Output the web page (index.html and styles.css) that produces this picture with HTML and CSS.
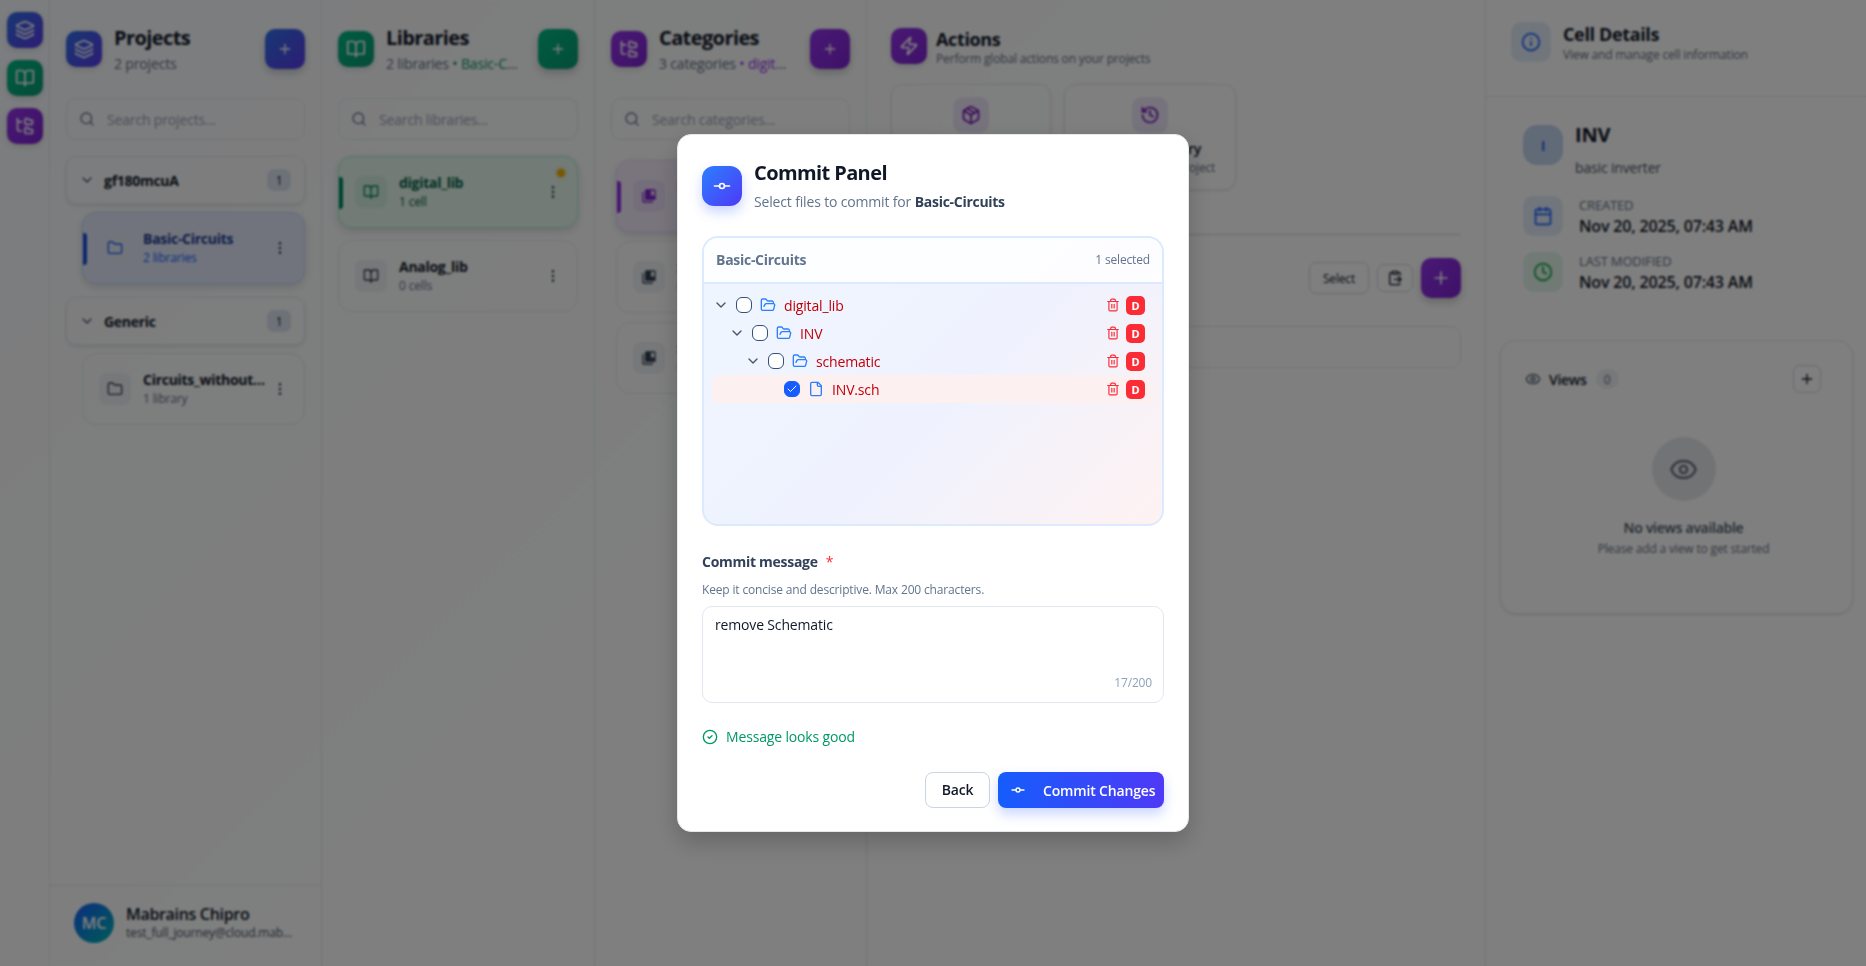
FILE: index.html
```html
<!DOCTYPE html>
<html lang="en">
<head>
    <meta charset="UTF-8">
    <meta name="viewport" content="width=device-width, initial-scale=1.0">
    <title>Commit Panel</title>
    <link rel="stylesheet" href="styles.css">
</head>
<body>
    <svg class="sprite" xmlns="http://www.w3.org/2000/svg">
        <symbol id="i-layers" viewBox="0 0 24 24"><path d="M12.83 2.18a2 2 0 0 0-1.66 0L2.6 6.08a1 1 0 0 0 0 1.83l8.58 3.91a2 2 0 0 0 1.66 0l8.58-3.9a1 1 0 0 0 0-1.83z"/><path d="M2 12a1 1 0 0 0 .58.91l8.6 3.91a2 2 0 0 0 1.65 0l8.58-3.9A1 1 0 0 0 22 12"/><path d="M2 17a1 1 0 0 0 .58.91l8.6 3.91a2 2 0 0 0 1.65 0l8.58-3.9A1 1 0 0 0 22 17"/></symbol>
        <symbol id="i-book" viewBox="0 0 24 24"><path d="M12 7v14"/><path d="M3 18a1 1 0 0 1-1-1V4a1 1 0 0 1 1-1h5a4 4 0 0 1 4 4 4 4 0 0 1 4-4h5a1 1 0 0 1 1 1v13a1 1 0 0 1-1 1h-6a3 3 0 0 0-3 3 3 3 0 0 0-3-3z"/></symbol>
        <symbol id="i-tree" viewBox="0 0 24 24"><path d="M20 10a1 1 0 0 0 1-1V6a1 1 0 0 0-1-1h-2.5a1 1 0 0 1-.8-.4l-.9-1.2A1 1 0 0 0 15 3h-2a1 1 0 0 0-1 1v5a1 1 0 0 0 1 1Z"/><path d="M20 21a1 1 0 0 0 1-1v-3a1 1 0 0 0-1-1h-2.9a1 1 0 0 1-.88-.55l-.42-.85a1 1 0 0 0-.92-.6H13a1 1 0 0 0-1 1v5a1 1 0 0 0 1 1Z"/><path d="M3 5a2 2 0 0 0 2 2h3"/><path d="M3 3v13a2 2 0 0 0 2 2h3"/></symbol>
        <symbol id="i-folder" viewBox="0 0 24 24"><path d="M20 20a2 2 0 0 0 2-2V8a2 2 0 0 0-2-2h-7.9a2 2 0 0 1-1.69-.9L9.6 3.9A2 2 0 0 0 7.93 3H4a2 2 0 0 0-2 2v13a2 2 0 0 0 2 2Z"/></symbol>
        <symbol id="i-folder-open" viewBox="0 0 24 24"><path d="m6 14 1.5-2.9A2 2 0 0 1 9.24 10H20a2 2 0 0 1 1.94 2.5l-1.54 6a2 2 0 0 1-1.95 1.5H4a2 2 0 0 1-2-2V5a2 2 0 0 1 2-2h3.9a2 2 0 0 1 1.69.9l.81 1.2a2 2 0 0 0 1.67.9H18a2 2 0 0 1 2 2v2"/></symbol>
        <symbol id="i-file" viewBox="0 0 24 24"><path d="M15 2H6a2 2 0 0 0-2 2v16a2 2 0 0 0 2 2h12a2 2 0 0 0 2-2V7Z"/><path d="M14 2v4a2 2 0 0 0 2 2h4"/></symbol>
        <symbol id="i-search" viewBox="0 0 24 24"><circle cx="11" cy="11" r="8"/><path d="m21 21-4.3-4.3"/></symbol>
        <symbol id="i-chevron" viewBox="0 0 24 24"><path d="m6 9 6 6 6-6"/></symbol>
        <symbol id="i-dots" viewBox="0 0 24 24"><circle cx="12" cy="5" r="1"/><circle cx="12" cy="12" r="1"/><circle cx="12" cy="19" r="1"/></symbol>
        <symbol id="i-plus" viewBox="0 0 24 24"><path d="M5 12h14"/><path d="M12 5v14"/></symbol>
        <symbol id="i-commit" viewBox="0 0 24 24"><circle cx="12" cy="12" r="3"/><path d="M3 12h6"/><path d="M15 12h6"/></symbol>
        <symbol id="i-trash" viewBox="0 0 24 24"><path d="M3 6h18"/><path d="M19 6v14c0 1-1 2-2 2H7c-1 0-2-1-2-2V6"/><path d="M8 6V4c0-1 1-2 2-2h4c1 0 2 1 2 2v2"/><path d="M10 11v6"/><path d="M14 11v6"/></symbol>
        <symbol id="i-zap" viewBox="0 0 24 24"><path d="M4 14a1 1 0 0 1-.78-1.63l9.9-10.2a.5.5 0 0 1 .86.46l-1.92 6.02A1 1 0 0 0 13 10h7a1 1 0 0 1 .78 1.63l-9.9 10.2a.5.5 0 0 1-.86-.46l1.92-6.02A1 1 0 0 0 11 14z"/></symbol>
        <symbol id="i-package" viewBox="0 0 24 24"><path d="M11 21.73a2 2 0 0 0 2 0l7-4A2 2 0 0 0 21 16V8a2 2 0 0 0-1-1.73l-7-4a2 2 0 0 0-2 0l-7 4A2 2 0 0 0 3 8v8a2 2 0 0 0 1 1.73z"/><path d="M12 22V12"/><path d="m3.3 7 8.7 5 8.7-5"/><path d="m7.5 4.27 9 5.15"/></symbol>
        <symbol id="i-history" viewBox="0 0 24 24"><path d="M3 12a9 9 0 1 0 9-9 9.75 9.75 0 0 0-6.74 2.74L3 8"/><path d="M3 3v5h5"/><path d="M12 7v5l4 2"/></symbol>
        <symbol id="i-info" viewBox="0 0 24 24"><circle cx="12" cy="12" r="10"/><path d="M12 16v-4"/><path d="M12 8h.01"/></symbol>
        <symbol id="i-calendar" viewBox="0 0 24 24"><path d="M8 2v4"/><path d="M16 2v4"/><rect x="3" y="4" width="18" height="18" rx="2"/><path d="M3 10h18"/></symbol>
        <symbol id="i-clock" viewBox="0 0 24 24"><circle cx="12" cy="12" r="10"/><path d="M12 6v6l4 2"/></symbol>
        <symbol id="i-eye" viewBox="0 0 24 24"><path d="M2.062 12.348a1 1 0 0 1 0-.696 10.75 10.75 0 0 1 19.876 0 1 1 0 0 1 0 .696 10.75 10.75 0 0 1-19.876 0"/><circle cx="12" cy="12" r="3"/></symbol>
        <symbol id="i-check-circle" viewBox="0 0 24 24"><circle cx="12" cy="12" r="10"/><path d="m9 12 2 2 4-4"/></symbol>
        <symbol id="i-check" viewBox="0 0 24 24"><path d="M20 6 9 17l-5-5"/></symbol>
        <symbol id="i-paste" viewBox="0 0 24 24"><path d="M11 14h10"/><path d="M16 4h2a2 2 0 0 1 2 2v1.344"/><path d="m17 18 4-4-4-4"/><path d="M8 4H6a2 2 0 0 0-2 2v14a2 2 0 0 0 2 2h12a2 2 0 0 0 1.793-1.113"/><rect x="8" y="2" width="8" height="4" rx="1"/></symbol>
        <symbol id="i-collection" viewBox="0 0 24 24"><path class="solid" d="M4 6H2v14c0 1.1.9 2 2 2h14v-2H4V6zm16-4H8c-1.1 0-2 .9-2 2v12c0 1.1.9 2 2 2h12c1.1 0 2-.9 2-2V4c0-1.1-.9-2-2-2zm0 10l-2.5-1.5L15 12V4h5v8z"/></symbol>
    </svg>

    <div class="app">
        <nav class="rail">
            <div class="tile tile-blue"><svg class="icon i20"><use href="#i-layers"/></svg></div>
            <div class="tile tile-green"><svg class="icon i20"><use href="#i-book"/></svg></div>
            <div class="tile tile-purple"><svg class="icon i20"><use href="#i-tree"/></svg></div>
        </nav>

        <section class="col col-projects">
            <div class="col-head">
                <div class="tile tile-blue"><svg class="icon i20"><use href="#i-layers"/></svg></div>
                <div class="col-title">
                    <h2>Projects</h2>
                    <p>2 projects</p>
                </div>
                <button class="add tile-blue"><svg class="icon i16"><use href="#i-plus"/></svg></button>
            </div>
            <div class="search"><svg class="icon i16"><use href="#i-search"/></svg><span>Search projects...</span></div>
            <div class="list">
                <div class="group">
                    <svg class="icon i16 muted"><use href="#i-chevron"/></svg>
                    <span class="group-name">gf180mcuA</span>
                    <span class="count">1</span>
                </div>
                <div class="item item-sub active-blue">
                    <span class="marker"></span>
                    <div class="item-icon"><svg class="icon i16"><use href="#i-folder"/></svg></div>
                    <div class="item-text"><b>Basic-Circuits</b><small>2 libraries</small></div>
                    <svg class="icon i16 dots"><use href="#i-dots"/></svg>
                </div>
                <div class="group group-next">
                    <svg class="icon i16 muted"><use href="#i-chevron"/></svg>
                    <span class="group-name">Generic</span>
                    <span class="count">1</span>
                </div>
                <div class="item item-sub">
                    <div class="item-icon"><svg class="icon i16"><use href="#i-folder"/></svg></div>
                    <div class="item-text"><b>Circuits_without_views</b><small>1 library</small></div>
                    <svg class="icon i16 dots"><use href="#i-dots"/></svg>
                </div>
            </div>
            <div class="user">
                <div class="avatar">MC</div>
                <div class="user-text"><b>Mabrains Chipro</b><small>test_full_journey@cloud.mabrains.com</small></div>
            </div>
        </section>

        <section class="col col-libs">
            <div class="col-head">
                <div class="tile tile-green"><svg class="icon i20"><use href="#i-book"/></svg></div>
                <div class="col-title">
                    <h2>Libraries</h2>
                    <p>2 libraries <span class="crumb-green">• Basic-Circuits</span></p>
                </div>
                <button class="add tile-green"><svg class="icon i16"><use href="#i-plus"/></svg></button>
            </div>
            <div class="search"><svg class="icon i16"><use href="#i-search"/></svg><span>Search libraries...</span></div>
            <div class="list">
                <div class="item active-green">
                    <span class="marker"></span>
                    <span class="dot"></span>
                    <div class="item-icon"><svg class="icon i16"><use href="#i-book"/></svg></div>
                    <div class="item-text"><b>digital_lib</b><small>1 cell</small></div>
                    <svg class="icon i16 dots"><use href="#i-dots"/></svg>
                </div>
                <div class="item">
                    <div class="item-icon"><svg class="icon i16"><use href="#i-book"/></svg></div>
                    <div class="item-text"><b>Analog_lib</b><small>0 cells</small></div>
                    <svg class="icon i16 dots"><use href="#i-dots"/></svg>
                </div>
            </div>
        </section>

        <section class="col">
            <div class="col-head">
                <div class="tile tile-purple"><svg class="icon i20"><use href="#i-tree"/></svg></div>
                <div class="col-title">
                    <h2>Categories</h2>
                    <p>3 categories <span class="crumb-purple">• digital_lib</span></p>
                </div>
                <button class="add tile-purple"><svg class="icon i16"><use href="#i-plus"/></svg></button>
            </div>
            <div class="search"><svg class="icon i16"><use href="#i-search"/></svg><span>Search categories...</span></div>
            <div class="list list-cats">
                <div class="item active-purple">
                    <span class="marker"></span>
                    <div class="item-icon"><svg class="icon i16"><use href="#i-collection"/></svg></div>
                    <div class="item-text"><b>Layout</b><small>1 cell</small></div>
                </div>
                <div class="item">
                    <div class="item-icon"><svg class="icon i16"><use href="#i-collection"/></svg></div>
                    <div class="item-text"><b>Schematic</b><small>0 cells</small></div>
                </div>
                <div class="item">
                    <div class="item-icon"><svg class="icon i16"><use href="#i-collection"/></svg></div>
                    <div class="item-text"><b>Symbol</b><small>0 cells</small></div>
                </div>
            </div>
        </section>

        <main class="actions">
            <div class="actions-head">
                <div class="tile tile-purple"><svg class="icon i20"><use href="#i-zap"/></svg></div>
                <div class="head-text">
                    <h3>Actions</h3>
                    <p>Perform global actions on your projects</p>
                </div>
            </div>
            <div class="action-cards">
                <div class="action-card card-a">
                    <div class="action-icon"><svg class="icon i20"><use href="#i-package"/></svg></div>
                    <b>Commit Panel</b>
                    <small>Commit your changes</small>
                </div>
                <div class="action-card card-b">
                    <div class="action-icon"><svg class="icon i20"><use href="#i-history"/></svg></div>
                    <b>Commit History</b>
                    <small>View history of a project</small>
                </div>
            </div>
            <div class="tabs"></div>
            <div class="toolbar">
                <button class="btn-select">Select</button>
                <button class="btn-paste"><svg class="icon i16"><use href="#i-paste"/></svg></button>
                <button class="add tile-purple"><svg class="icon i20"><use href="#i-plus"/></svg></button>
            </div>
            <div class="cell-search"></div>
        </main>

        <aside class="details">
            <div class="details-head">
                <div class="soft-tile soft-blue"><svg class="icon i20"><use href="#i-info"/></svg></div>
                <div class="head-text">
                    <h3>Cell Details</h3>
                    <p>View and manage cell information</p>
                </div>
            </div>
            <div class="details-body">
                <div class="cell-row">
                    <div class="soft-tile cell-letter">I</div>
                    <div>
                        <h2>INV</h2>
                        <p class="cell-desc">basic inverter</p>
                    </div>
                </div>
                <div class="meta">
                    <div class="soft-tile soft-blue"><svg class="icon i20"><use href="#i-calendar"/></svg></div>
                    <div class="meta-text"><span>CREATED</span><b>Nov 20, 2025, 07:43 AM</b></div>
                </div>
                <div class="meta">
                    <div class="soft-tile soft-green"><svg class="icon i20"><use href="#i-clock"/></svg></div>
                    <div class="meta-text"><span>LAST MODIFIED</span><b>Nov 20, 2025, 07:43 AM</b></div>
                </div>
            </div>
            <div class="views">
                <div class="views-head">
                    <svg class="icon i16 muted"><use href="#i-eye"/></svg>
                    <b>Views</b>
                    <span class="views-count">0</span>
                    <button class="views-add"><svg class="icon i16"><use href="#i-plus"/></svg></button>
                </div>
                <div class="views-empty">
                    <div class="empty-circle"><svg class="icon i28"><use href="#i-eye"/></svg></div>
                    <b>No views available</b>
                    <small>Please add a view to get started</small>
                </div>
            </div>
        </aside>
    </div>

    <div class="overlay">
        <div class="modal">
            <div class="modal-head">
                <div class="modal-icon"><svg class="icon i20"><use href="#i-commit"/></svg></div>
                <div class="modal-title">
                    <h1>Commit Panel</h1>
                    <p>Select files to commit for <b>Basic-Circuits</b></p>
                </div>
            </div>

            <div class="files">
                <div class="files-head">
                    <b>Basic-Circuits</b>
                    <span>1 selected</span>
                </div>
                <div class="files-tree">
                    <div class="row">
                        <svg class="icon i16 chev"><use href="#i-chevron"/></svg>
                        <span class="check"></span>
                        <svg class="icon i16 ficon"><use href="#i-folder-open"/></svg>
                        <span class="fname">digital_lib</span>
                        <svg class="icon i14 trash"><use href="#i-trash"/></svg>
                        <span class="tag">D</span>
                    </div>
                    <div class="row lvl1">
                        <svg class="icon i16 chev"><use href="#i-chevron"/></svg>
                        <span class="check"></span>
                        <svg class="icon i16 ficon"><use href="#i-folder-open"/></svg>
                        <span class="fname">INV</span>
                        <svg class="icon i14 trash"><use href="#i-trash"/></svg>
                        <span class="tag">D</span>
                    </div>
                    <div class="row lvl2">
                        <svg class="icon i16 chev"><use href="#i-chevron"/></svg>
                        <span class="check"></span>
                        <svg class="icon i16 ficon"><use href="#i-folder-open"/></svg>
                        <span class="fname">schematic</span>
                        <svg class="icon i14 trash"><use href="#i-trash"/></svg>
                        <span class="tag">D</span>
                    </div>
                    <div class="row lvl3 selected">
                        <span class="chev-space"></span>
                        <span class="check checked"><svg class="icon i12"><use href="#i-check"/></svg></span>
                        <svg class="icon i16 ficon"><use href="#i-file"/></svg>
                        <span class="fname">INV.sch</span>
                        <svg class="icon i14 trash"><use href="#i-trash"/></svg>
                        <span class="tag">D</span>
                    </div>
                </div>
            </div>

            <div class="msg-label"><b>Commit message</b><span class="req">*</span></div>
            <p class="msg-hint">Keep it concise and descriptive. Max 200 characters.</p>
            <div class="msg-box">
                <p>remove Schematic</p>
                <span class="msg-count">17/200</span>
            </div>
            <div class="msg-ok"><svg class="icon i16"><use href="#i-check-circle"/></svg><span>Message looks good</span></div>

            <div class="modal-foot">
                <button class="btn-back">Back</button>
                <button class="btn-commit"><svg class="icon i16"><use href="#i-commit"/></svg><span>Commit Changes</span></button>
            </div>
        </div>
    </div>
</body>
</html>
```

FILE: styles.css
```css
* {
    box-sizing: border-box;
}
html, body {
    height: 100%;
}
body {
    margin: 0;
    font-family: "Open Sans", Arial, sans-serif;
    letter-spacing: -0.01em;
    color: #101828;
    background: linear-gradient(135deg, #f8fafc, #ffffff 50%);
    overflow: hidden;
}
h1, h2, h3, p {
    margin: 0;
}
b {
    letter-spacing: -0.02em;
}
button {
    font-family: inherit;
    letter-spacing: inherit;
    cursor: pointer;
}
small {
    display: block;
}
.sprite {
    display: none;
}
.icon {
    display: block;
    flex: none;
    fill: none;
    stroke: currentColor;
    stroke-width: 2;
    stroke-linecap: round;
    stroke-linejoin: round;
}
.solid {
    fill: currentColor;
    stroke: none;
}
.i12 { width: 12px; height: 12px; }
.i14 { width: 14px; height: 14px; }
.i16 { width: 16px; height: 16px; }
.i20 { width: 20px; height: 20px; }
.i28 { width: 29px; height: 29px; }
.muted { color: #475467; }

.app {
    display: flex;
    height: 966px;
}
.rail {
    width: 50px;
    flex: none;
    padding: 12px 7px;
    display: flex;
    flex-direction: column;
    gap: 12px;
    border-right: 1px solid #e5e7eb;
}
.tile {
    width: 36px;
    height: 36px;
    flex: none;
    border-radius: 10px;
    display: flex;
    align-items: center;
    justify-content: center;
    color: #fff;
    box-shadow: 0 2px 6px rgba(0, 0, 0, 0.15);
}
.tile-blue { background: linear-gradient(135deg, #2f6fe8, #5a3ae8); }
.tile-green { background: linear-gradient(135deg, #00b884, #0a9a70); }
.tile-purple { background: linear-gradient(135deg, #9333ea, #7c22ce); }

.col {
    width: 272px;
    flex: none;
    display: flex;
    flex-direction: column;
    padding: 0 16px;
    border-right: 1px solid #e5e7eb;
}
.col-projects { width: 272px; }
.col-libs { width: 273px; }
.col-head {
    height: 98px;
    padding-top: 29px;
    display: flex;
    align-items: flex-start;
}
.col-head .tile {
    margin-top: 2px;
}
.col-title {
    flex: 1;
    min-width: 0;
    margin-top: -1px;
    padding: 0 18px 0 12px;
}
.col-title h2 {
    font-size: 20px;
    line-height: 20px;
    font-weight: 700;
    letter-spacing: -0.03em;
}
.col-title p {
    margin-top: 6px;
    font-size: 14px;
    line-height: 20px;
    color: #667085;
    white-space: nowrap;
    overflow: hidden;
    text-overflow: ellipsis;
}
.crumb-green { color: #059669; }
.crumb-purple { color: #9333ea; }
.add {
    width: 40px;
    height: 40px;
    flex: none;
    border: 0;
    border-radius: 10px;
    display: flex;
    align-items: center;
    justify-content: center;
    color: #fff;
    box-shadow: 0 4px 8px rgba(0, 0, 0, 0.2);
}
.search {
    height: 42px;
    flex: none;
    display: flex;
    align-items: center;
    gap: 12px;
    padding: 0 12px;
    border: 1px solid #e5e7eb;
    border-radius: 10px;
    font-size: 14px;
    color: #98a2b3;
}
.search .icon {
    color: #667085;
}
.list {
    flex: 1;
    padding-top: 16px;
    display: flex;
    flex-direction: column;
    gap: 12px;
}
.list-cats {
    padding: 20px 0 0 5px;
    gap: 9px;
}
.group {
    height: 48px;
    flex: none;
    display: flex;
    align-items: center;
    gap: 9px;
    padding: 0 13px 0 12px;
    border: 1px solid #e5e7eb;
    border-radius: 10px;
    box-shadow: 0 2px 4px rgba(0, 0, 0, 0.1);
    margin-bottom: -4px;
}
.group-next {
    margin-top: 1px;
}
.group-name {
    flex: 1;
    font-size: 14px;
    font-weight: 700;
    letter-spacing: -0.02em;
}
.count {
    width: 24px;
    height: 22px;
    border-radius: 7px;
    background: #dbe4f0;
    font-size: 12px;
    font-weight: 500;
    display: flex;
    align-items: center;
    justify-content: center;
}
.item {
    position: relative;
    height: 72px;
    flex: none;
    display: flex;
    align-items: center;
    padding: 0 16px;
    border: 1px solid #e5e7eb;
    border-radius: 14px;
}
.item-sub {
    margin-left: 16px;
}
.item-icon {
    width: 32px;
    height: 32px;
    flex: none;
    border-radius: 8px;
    background: #eef0f3;
    color: #344054;
    display: flex;
    align-items: center;
    justify-content: center;
}
.item-text {
    flex: 1;
    min-width: 0;
    padding-left: 12px;
}
.item-text b {
    display: block;
    font-size: 14px;
    line-height: 20px;
    font-weight: 700;
    white-space: nowrap;
    overflow: hidden;
    text-overflow: ellipsis;
}
.item-text small {
    font-size: 12px;
    line-height: 18px;
    color: #667085;
}
.dots {
    color: #344054;
    margin-left: 4px;
}
.marker {
    position: absolute;
    left: 0;
    top: 20px;
    width: 4px;
    height: 32px;
    border-radius: 0 3px 3px 0;
}
.dot {
    position: absolute;
    top: 12px;
    right: 12px;
    width: 8px;
    height: 8px;
    border-radius: 50%;
    background: #f0b100;
    box-shadow: 0 0 0 2px rgba(240, 177, 0, 0.2);
}
.active-blue {
    background: #e2e9fa;
    border-color: #bedbff;
    box-shadow: 0 3px 8px rgba(0, 0, 0, 0.14);
}
.active-blue .marker { background: #1d4ed8; }
.active-blue b { color: #1c398e; }
.active-blue small, .active-blue .item-icon { color: #155dfc; }
.active-blue .item-icon { background: #e3e9f5; }
.active-green {
    background: #e4f6ec;
    border-color: #a4f4cf;
    box-shadow: 0 3px 8px rgba(0, 0, 0, 0.14);
}
.active-green .marker { background: #00875f; }
.active-green b, .active-green small { color: #006045; }
.active-green .item-icon { background: #d3eee0; color: #00875f; }
.active-purple {
    background: #f3ebfb;
    border-color: #e9d4ff;
    box-shadow: 0 3px 8px rgba(0, 0, 0, 0.14);
}
.active-purple .marker { background: #8e2de2; }
.active-purple .item-icon { background: #e9dcf6; color: #7e22ce; }
.user {
    height: 81px;
    margin: 0 -16px;
    padding: 0 24px 7px;
    flex: none;
    display: flex;
    align-items: center;
    gap: 12px;
    border-top: 1px solid #e5e7eb;
}
.avatar {
    width: 40px;
    height: 40px;
    flex: none;
    border-radius: 50%;
    background: linear-gradient(135deg, #155dfc, #00b8b0);
    color: #fff;
    font-size: 16px;
    font-weight: 600;
    display: flex;
    align-items: center;
    justify-content: center;
}
.user-text {
    min-width: 0;
    flex: 1;
}
.user-text b {
    display: block;
    font-size: 16px;
    line-height: 20px;
    font-weight: 600;
}
.user-text small {
    font-size: 12px;
    line-height: 18px;
    color: #4a5565;
    white-space: nowrap;
    overflow: hidden;
    text-overflow: ellipsis;
}

.actions {
    width: 619px;
    flex: none;
    padding: 28px 24px 0;
    border-right: 1px solid #e5e7eb;
}
.actions-head {
    display: flex;
    gap: 9px;
}
.head-text h3 {
    font-size: 18px;
    line-height: 22px;
    font-weight: 700;
    letter-spacing: -0.02em;
}
.head-text p {
    font-size: 12px;
    line-height: 18px;
    color: #667085;
}
.action-cards {
    margin-top: 16px;
    display: flex;
    gap: 13px;
}
.action-card {
    height: 106px;
    padding-top: 12px;
    border: 1px solid #e5e7eb;
    border-radius: 12px;
    box-shadow: 0 1px 3px rgba(0, 0, 0, 0.1);
    text-align: center;
    font-size: 14px;
    white-space: nowrap;
}
.card-a { width: 160px; }
.card-b { width: 172px; }
.action-card b {
    display: block;
    margin-top: 6px;
    font-weight: 600;
    line-height: 20px;
}
.action-card small {
    font-size: 12px;
    line-height: 18px;
    color: #667085;
}
.action-icon {
    width: 36px;
    height: 36px;
    margin: 0 auto;
    border-radius: 10px;
    background: #eee6f8;
    color: #6e11b0;
    display: flex;
    align-items: center;
    justify-content: center;
}
.tabs {
    height: 1px;
    margin-top: 44px;
    background: #cbd5e1;
}
.toolbar {
    margin-top: 23px;
    height: 40px;
    display: flex;
    align-items: center;
    justify-content: flex-end;
    gap: 8px;
}
.btn-select {
    width: 60px;
    height: 32px;
    padding: 0;
    background: none;
    border: 1px solid #d0d5dd;
    border-radius: 7px;
    font-size: 12px;
    font-weight: 500;
    color: #101828;
}
.btn-paste {
    width: 36px;
    height: 28px;
    padding: 0;
    background: none;
    border: 1px solid #d0d5dd;
    border-radius: 7px;
    color: #101828;
    display: flex;
    align-items: center;
    justify-content: center;
}
.cell-search {
    margin-top: 28px;
    height: 42px;
    border: 1px solid #e2e8f0;
    border-radius: 10px;
}

.details {
    flex: 1;
    min-width: 0;
}
.details-head {
    height: 97px;
    padding: 22px 25px 0;
    display: flex;
    gap: 12px;
    border-bottom: 1px solid #e5e7eb;
}
.details-head .head-text {
    margin-top: 1px;
}
.details-head .head-text p {
    margin-top: 1px;
}
.soft-tile {
    width: 40px;
    height: 40px;
    flex: none;
    border-radius: 10px;
    display: flex;
    align-items: center;
    justify-content: center;
}
.soft-blue { background: #e3ecfa; color: #155dfc; }
.soft-green { background: #e4f5ea; color: #00a63e; }
.details-body {
    padding: 28px 37px 0;
}
.cell-row {
    display: flex;
    gap: 12px;
    height: 71px;
}
.cell-row h2 {
    font-size: 20px;
    line-height: 20px;
    font-weight: 700;
}
.cell-letter {
    background: #c3d4ee;
    color: #1447e6;
    font-size: 14px;
    font-weight: 600;
    border-radius: 14px;
}
.cell-desc {
    margin-top: 13px;
    font-size: 14px;
    line-height: 20px;
    color: #4a5565;
}
.meta {
    display: flex;
    gap: 16px;
    height: 56px;
}
.meta-text span {
    display: block;
    font-size: 13px;
    line-height: 18px;
    font-weight: 500;
    color: #667085;
}
.meta-text b {
    display: block;
    margin-top: 1px;
    font-size: 16px;
    line-height: 22px;
    font-weight: 600;
    letter-spacing: -0.01em;
}
.views {
    margin: 32px 13px 0 14px;
    height: 274px;
    border: 1px solid #e5e7eb;
    border-radius: 16px;
    padding: 24px 31px 0 24px;
    box-shadow: 0 1px 3px rgba(0, 0, 0, 0.12);
}
.views-head {
    display: flex;
    align-items: center;
    gap: 8px;
    height: 28px;
    font-size: 14px;
}
.views-head b {
    font-weight: 600;
}
.views-count {
    margin-left: 1px;
    width: 23px;
    height: 20px;
    border-radius: 10px;
    background: #eef0f3;
    color: #667085;
    font-size: 12px;
    display: flex;
    align-items: center;
    justify-content: center;
}
.views-add {
    margin-left: auto;
    width: 28px;
    height: 28px;
    padding: 0;
    background: none;
    border: 1px solid #d0d5dd;
    border-radius: 7px;
    color: #101828;
    display: flex;
    align-items: center;
    justify-content: center;
}
.views-empty {
    margin-top: 44px;
    margin-right: -21px;
    display: flex;
    flex-direction: column;
    align-items: center;
}
.empty-circle {
    width: 64px;
    height: 64px;
    border-radius: 50%;
    background: #e5e7eb;
    color: #6a7282;
    display: flex;
    align-items: center;
    justify-content: center;
}
.views-empty b {
    margin-top: 17px;
    font-size: 14px;
    line-height: 20px;
    font-weight: 600;
    color: #4a5565;
}
.views-empty small {
    margin-top: 2px;
    font-size: 12px;
    line-height: 18px;
    color: #6a7282;
}

.overlay {
    position: fixed;
    inset: 0;
    background: rgba(0, 0, 0, 0.5);
    backdrop-filter: blur(1px);
    display: flex;
    align-items: center;
    justify-content: center;
}
.modal {
    width: 512px;
    height: 698px;
    padding: 31px 24px 0;
    background: #fff;
    border: 1px solid #e5e7eb;
    border-radius: 14px;
    box-shadow: 0 10px 25px rgba(0, 0, 0, 0.2);
}
.modal-head {
    display: flex;
    gap: 12px;
    height: 70px;
}
.modal-icon {
    width: 40px;
    height: 40px;
    flex: none;
    border-radius: 12px;
    background: linear-gradient(135deg, #2b7fff, #4f39f6);
    color: #fff;
    display: flex;
    align-items: center;
    justify-content: center;
    box-shadow: 0 6px 12px rgba(43, 90, 255, 0.25);
}
.modal-title h1 {
    margin-top: -5px;
    font-size: 20px;
    line-height: 24px;
    font-weight: 700;
    letter-spacing: -0.03em;
}
.modal-title p {
    margin-top: 7px;
    font-size: 14px;
    line-height: 20px;
    color: #62748e;
}
.modal-title b {
    font-weight: 700;
    color: #314158;
}
.files {
    height: 290px;
    border: 2px solid #dbeafe;
    border-radius: 16px;
    overflow: hidden;
    background: linear-gradient(135deg, #eff6ff, #eff2fe 55%, #fef2f2);
}
.files-head {
    height: 46px;
    padding: 0 12px 2px;
    display: flex;
    align-items: center;
    justify-content: space-between;
    background: rgba(255, 255, 255, 0.85);
    border-bottom: 2px solid #dbeafe;
}
.files-head b {
    font-size: 14px;
    font-weight: 700;
    color: #62748e;
}
.files-head span {
    font-size: 12px;
    color: #62748e;
}
.files-tree {
    padding: 7px 8px;
}
.row {
    height: 28px;
    display: flex;
    align-items: center;
    padding: 0 9px 0 1px;
    border-radius: 8px;
    color: #c10007;
    font-size: 14px;
}
.lvl1 { padding-left: 17px; }
.lvl2 { padding-left: 33px; }
.lvl3 { padding-left: 49px; }
.selected {
    background: #fdf0f1;
}
.chev {
    color: #45556c;
}
.chev-space {
    width: 16px;
    flex: none;
}
.check {
    width: 16px;
    height: 16px;
    flex: none;
    margin-left: 7px;
    border: 1.5px solid #314f7f;
    border-radius: 6px;
    background: #fff;
    display: flex;
    align-items: center;
    justify-content: center;
}
.checked {
    background: #155dfc;
    border-color: #155dfc;
    color: #fff;
}
.ficon {
    margin-left: 8px;
    color: #2b7fff;
}
.fname {
    flex: 1;
    margin-left: 8px;
}
.trash {
    color: #fb2c36;
}
.tag {
    width: 19px;
    height: 19px;
    margin-left: 6px;
    border-radius: 5px;
    background: #fb2c36;
    color: #fff;
    font-size: 11px;
    font-weight: 700;
    display: flex;
    align-items: center;
    justify-content: center;
}
.msg-label {
    margin-top: 26px;
    font-size: 14px;
    line-height: 20px;
    color: #314158;
}
.msg-label b {
    font-weight: 700;
}
.req {
    margin-left: 8px;
    color: #fb2c36;
}
.msg-hint {
    margin-top: 9px;
    font-size: 12px;
    line-height: 18px;
    color: #62748e;
}
.msg-box {
    position: relative;
    height: 97px;
    margin-top: 7px;
    padding: 8px 12px;
    border: 1px solid #e2e8f0;
    border-radius: 10px;
    font-size: 14px;
    line-height: 20px;
    color: #101828;
}
.msg-count {
    position: absolute;
    right: 11px;
    bottom: 10px;
    font-size: 12px;
    line-height: 18px;
    color: #90a1b9;
}
.msg-ok {
    margin-top: 24px;
    display: flex;
    align-items: center;
    gap: 8px;
    font-size: 14px;
    line-height: 20px;
    color: #009966;
}
.modal-foot {
    margin-top: 25px;
    display: flex;
    justify-content: flex-end;
    gap: 8px;
}
.btn-back {
    width: 65px;
    height: 36px;
    padding: 0 0 2px;
    background: #fff;
    border: 1px solid #cbd5e1;
    border-radius: 8px;
    font-size: 14px;
    font-weight: 600;
    color: #101828;
}
.btn-commit {
    width: 166px;
    height: 36px;
    padding: 0 12px;
    border: 0;
    border-radius: 8px;
    background: linear-gradient(90deg, #155dfc, #4f39f6);
    color: #fff;
    font-size: 14px;
    font-weight: 600;
    white-space: nowrap;
    display: flex;
    align-items: center;
    gap: 17px;
    box-shadow: 0 6px 12px rgba(43, 90, 255, 0.25);
}
```
